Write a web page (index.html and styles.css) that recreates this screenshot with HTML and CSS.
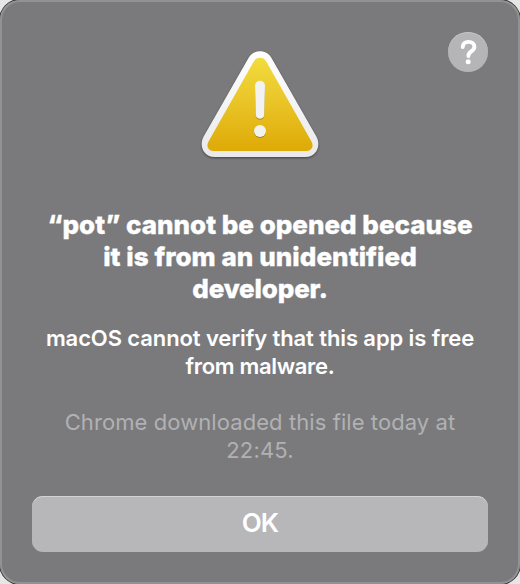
FILE: index.html
```html
<!DOCTYPE html>
<html lang="en">
<head>
<meta charset="utf-8">
<title>Security alert</title>
<link rel="stylesheet" href="styles.css">
</head>
<body>
<main class="dialog">
  <button class="help" aria-label="Help">
    <svg width="40" height="40" viewBox="0 0 40 40" fill="none"><path d="M14.7 15.100C15 11.600 17.100 9.900 20.500 9.900c3.500 0 5.900 1.900 5.900 4.900 0 2.200-1.200 3.500-3.200 4.700-2 1.300-2.800 2.300-2.800 4.500" stroke="#fff" stroke-width="3.900" stroke-linecap="round" stroke-linejoin="round"/><circle cx="20.200" cy="29.800" r="2.500" fill="#fff"/></svg>
  </button>
  <svg class="warning" width="140" height="125" viewBox="0 0 140 125">
    <defs>
      <linearGradient id="yellow" x1="0" y1="0" x2="0" y2="1"><stop offset="0" stop-color="#f2dc3e"/><stop offset=".5" stop-color="#e9c326"/><stop offset="1" stop-color="#deaa06"/></linearGradient>
      <linearGradient id="rim" x1="0" y1="0" x2="0" y2="1"><stop offset="0" stop-color="#fff"/><stop offset="1" stop-color="#e9e9e9"/></linearGradient>
    </defs>
    <path class="rim" fill="url(#rim)" d="M58.500 18C61 13.700 65 11.300 70 11.300S79 13.700 81.500 18L126.200 96.200C131.500 105.500 126.500 117 115.500 117H24.500C13.500 117 8.500 105.500 13.800 96.200Z"/>
    <path fill="url(#yellow)" d="M63.600 21.700C65 19.200 67.200 17.800 70 17.800S75 19.200 76.400 21.700L121.200 101C124.500 106.700 121.500 111 115.500 111H24.500C18.500 111 15.500 106.700 18.800 101Z"/>
    <g class="mark" fill="#f2f2f1"><path d="M65 45.500C65 39 75 39 75 45.500L74.200 75C74 80 66 80 65.800 75Z"/><circle cx="70" cy="91" r="6"/></g>
  </svg>
  <h1 class="title"><span class="t1">“pot” cannot be opened because</span><br><span class="t2">it is from an unidentified</span><br><span class="t3">developer.</span></h1>
  <p class="message"><span class="m1">macOS cannot verify that this app is free</span><br><span class="m2">from malware.</span></p>
  <p class="origin"><span class="o1">Chrome downloaded this file today at</span><br><span class="o2">22:45.</span></p>
  <button class="ok">OK</button>
</main>
</body>
</html>
```
FILE: styles.css
```css
* { box-sizing: border-box; }
body { margin: 0; background: #e6e6e7; font-family: Inter, sans-serif; overflow: hidden; }
.dialog {
  position: relative;
  display: flex;
  flex-direction: column;
  align-items: center;
  width: 520px;
  height: 584px;
  padding: 40px 32px 32px;
  background: #7a7a7c;
  border-radius: 20px;
  box-shadow: inset 0 0 0 2px #929294, 0 0 0 1px #38383a;
  text-align: center;
}
.help {
  position: absolute;
  top: 32px;
  left: 448px;
  width: 40px;
  height: 40px;
  padding: 0;
  border: 0;
  border-radius: 50%;
  background: #b5b5b8;
  box-shadow: inset 0 1px 0 #c4c4c6;
}
.help svg { display: block; }
.warning { flex: none; }
.rim { filter: drop-shadow(0 1px 1px #0007); }
.mark { filter: drop-shadow(0 1px .7px #7a5b0088); }
.title, .message, .origin { margin: 0; white-space: nowrap; }
.title {
  margin-top: 44px;
  color: #fff;
  font-size: 26px;
  font-weight: 800;
  line-height: 32px;
  -webkit-text-stroke: .35px #fff;
}
.t2 { letter-spacing: .06px; }
.t3 { letter-spacing: -.15px; }
.message {
  margin-top: 19px;
  color: #fff;
  font-size: 22px;
  font-weight: 600;
  line-height: 28px;
}
.m1 { letter-spacing: -.1px; }
.m2 { letter-spacing: -.33px; }
.origin {
  margin-top: 28px;
  color: #b1b1b3;
  font-size: 22px;
  line-height: 28px;
}
.o1 { letter-spacing: .08px; }
.o2 { letter-spacing: .15px; }
.ok {
  width: 456px;
  height: 56px;
  margin-top: auto;
  padding: 0 0 4px;
  border: 0;
  border-radius: 11px;
  background: #b7b7b9;
  box-shadow: inset 0 1px 0 #d3d3d4;
  color: #fff;
  font: 600 26px Inter, sans-serif;
  letter-spacing: -.8px;
}
```
